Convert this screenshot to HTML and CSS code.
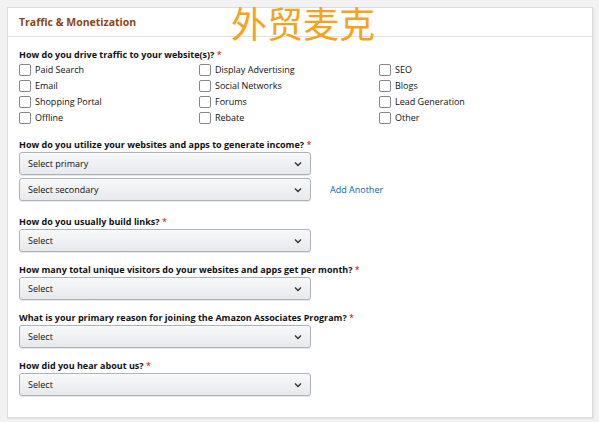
FILE: index.html
```html
<!DOCTYPE html>
<html>
<head>
<meta charset="utf-8">
<link rel="stylesheet" href="styles.css">
</head>
<body>
<div class="card">
  <div class="card-head">
    <span class="title">Traffic &amp; Monetization</span>
  </div>
  <div class="card-body">
    <div class="field">
      <div class="label">How do you drive traffic to your website(s)? <span class="req">*</span></div>
      <div class="checks">
        <label class="check"><span class="box"></span>Paid Search</label>
        <label class="check"><span class="box"></span>Display Advertising</label>
        <label class="check"><span class="box"></span>SEO</label>
        <label class="check"><span class="box"></span>Email</label>
        <label class="check"><span class="box"></span>Social Networks</label>
        <label class="check"><span class="box"></span>Blogs</label>
        <label class="check"><span class="box"></span>Shopping Portal</label>
        <label class="check"><span class="box"></span>Forums</label>
        <label class="check"><span class="box"></span>Lead Generation</label>
        <label class="check"><span class="box"></span>Offline</label>
        <label class="check"><span class="box"></span>Rebate</label>
        <label class="check"><span class="box"></span>Other</label>
      </div>
    </div>
    <div class="field field-income">
      <div class="label">How do you utilize your websites and apps to generate income? <span class="req">*</span></div>
      <div class="select"><span>Select primary</span><svg class="chev" width="8" height="6" viewBox="0 0 8 6"><path d="M1 1.5 L4 4.5 L7 1.5" fill="none" stroke="#333" stroke-width="1.4"/></svg></div>
      <div class="row">
        <div class="select"><span>Select secondary</span><svg class="chev" width="8" height="6" viewBox="0 0 8 6"><path d="M1 1.5 L4 4.5 L7 1.5" fill="none" stroke="#333" stroke-width="1.4"/></svg></div>
        <a class="link">Add Another</a>
      </div>
    </div>
    <div class="field">
      <div class="label">How do you usually build links? <span class="req">*</span></div>
      <div class="select"><span>Select</span><svg class="chev" width="8" height="6" viewBox="0 0 8 6"><path d="M1 1.5 L4 4.5 L7 1.5" fill="none" stroke="#333" stroke-width="1.4"/></svg></div>
    </div>
    <div class="field">
      <div class="label">How many total unique visitors do your websites and apps get per month? <span class="req">*</span></div>
      <div class="select"><span>Select</span><svg class="chev" width="8" height="6" viewBox="0 0 8 6"><path d="M1 1.5 L4 4.5 L7 1.5" fill="none" stroke="#333" stroke-width="1.4"/></svg></div>
    </div>
    <div class="field">
      <div class="label">What is your primary reason for joining the Amazon Associates Program? <span class="req">*</span></div>
      <div class="select"><span>Select</span><svg class="chev" width="8" height="6" viewBox="0 0 8 6"><path d="M1 1.5 L4 4.5 L7 1.5" fill="none" stroke="#333" stroke-width="1.4"/></svg></div>
    </div>
    <div class="field">
      <div class="label">How did you hear about us? <span class="req">*</span></div>
      <div class="select"><span>Select</span><svg class="chev" width="8" height="6" viewBox="0 0 8 6"><path d="M1 1.5 L4 4.5 L7 1.5" fill="none" stroke="#333" stroke-width="1.4"/></svg></div>
    </div>
  </div>
</div>
<div class="watermark">外贸麦克</div>
</body>
</html>
```
FILE: styles.css
```css
html, body {
  margin: 0;
  padding: 0;
}
body {
  background: #f2f2f2;
  font-family: "Open Sans", "Noto Sans", sans-serif;
  color: #111;
  padding: 7px 6px 4px 7px;
  position: relative;
}
.card {
  background: #fff;
  border: 1px solid #dcdcdc;
  box-shadow: 1px 1px 2px rgba(0,0,0,0.08);
  height: 411px;
  box-sizing: border-box;
}
.card-head {
  height: 28px;
  border-bottom: 1px solid #e0e0e0;
  display: flex;
  align-items: center;
  padding-left: 11px;
}
.title {
  font-size: 10.5px;
  font-weight: 700;
  color: #8b4513;
}
.watermark {
  position: absolute;
  left: 231px;
  top: 2px;
  font-family: "Noto Sans CJK SC", sans-serif;
  font-size: 36px;
  line-height: 40px;
  color: #f7a21b;
  white-space: nowrap;
}
.card-body {
  padding: 11px 11px 0 11px;
  display: flex;
  flex-direction: column;
  gap: 11px;
}
.field {
  display: flex;
  flex-direction: column;
  gap: 1px;
}
.field-income {
  margin-top: 3px;
  margin-bottom: 3px;
}
.label {
  font-size: 9px;
  font-weight: 700;
  line-height: 13px;
}
.req {
  color: #c40000;
  font-weight: 400;
}
.checks {
  display: grid;
  grid-template-columns: 180px 180px 180px;
  row-gap: 4px;
  margin-top: 2px;
}
.check {
  display: flex;
  align-items: center;
  gap: 4px;
  font-size: 9px;
  line-height: 12px;
  color: #111;
}
.box {
  width: 10px;
  height: 10px;
  border: 1px solid #888;
  border-radius: 2px;
  background: #fff;
  flex: none;
}
.select {
  width: 292px;
  height: 23px;
  box-sizing: border-box;
  border: 1px solid #adb1b8;
  border-radius: 3px;
  background: linear-gradient(#f7f8fa, #e7e9ec);
  box-shadow: 0 1px 0 rgba(255,255,255,0.6) inset, 0 1px 1px rgba(0,0,0,0.1);
  display: flex;
  align-items: center;
  justify-content: space-between;
  padding: 0 8px 0 8px;
  font-size: 9px;
  color: #111;
}
.row {
  display: flex;
  align-items: center;
  gap: 19px;
  margin-top: 2px;
}
.link {
  font-size: 9px;
  color: #0066c0;
}
```
